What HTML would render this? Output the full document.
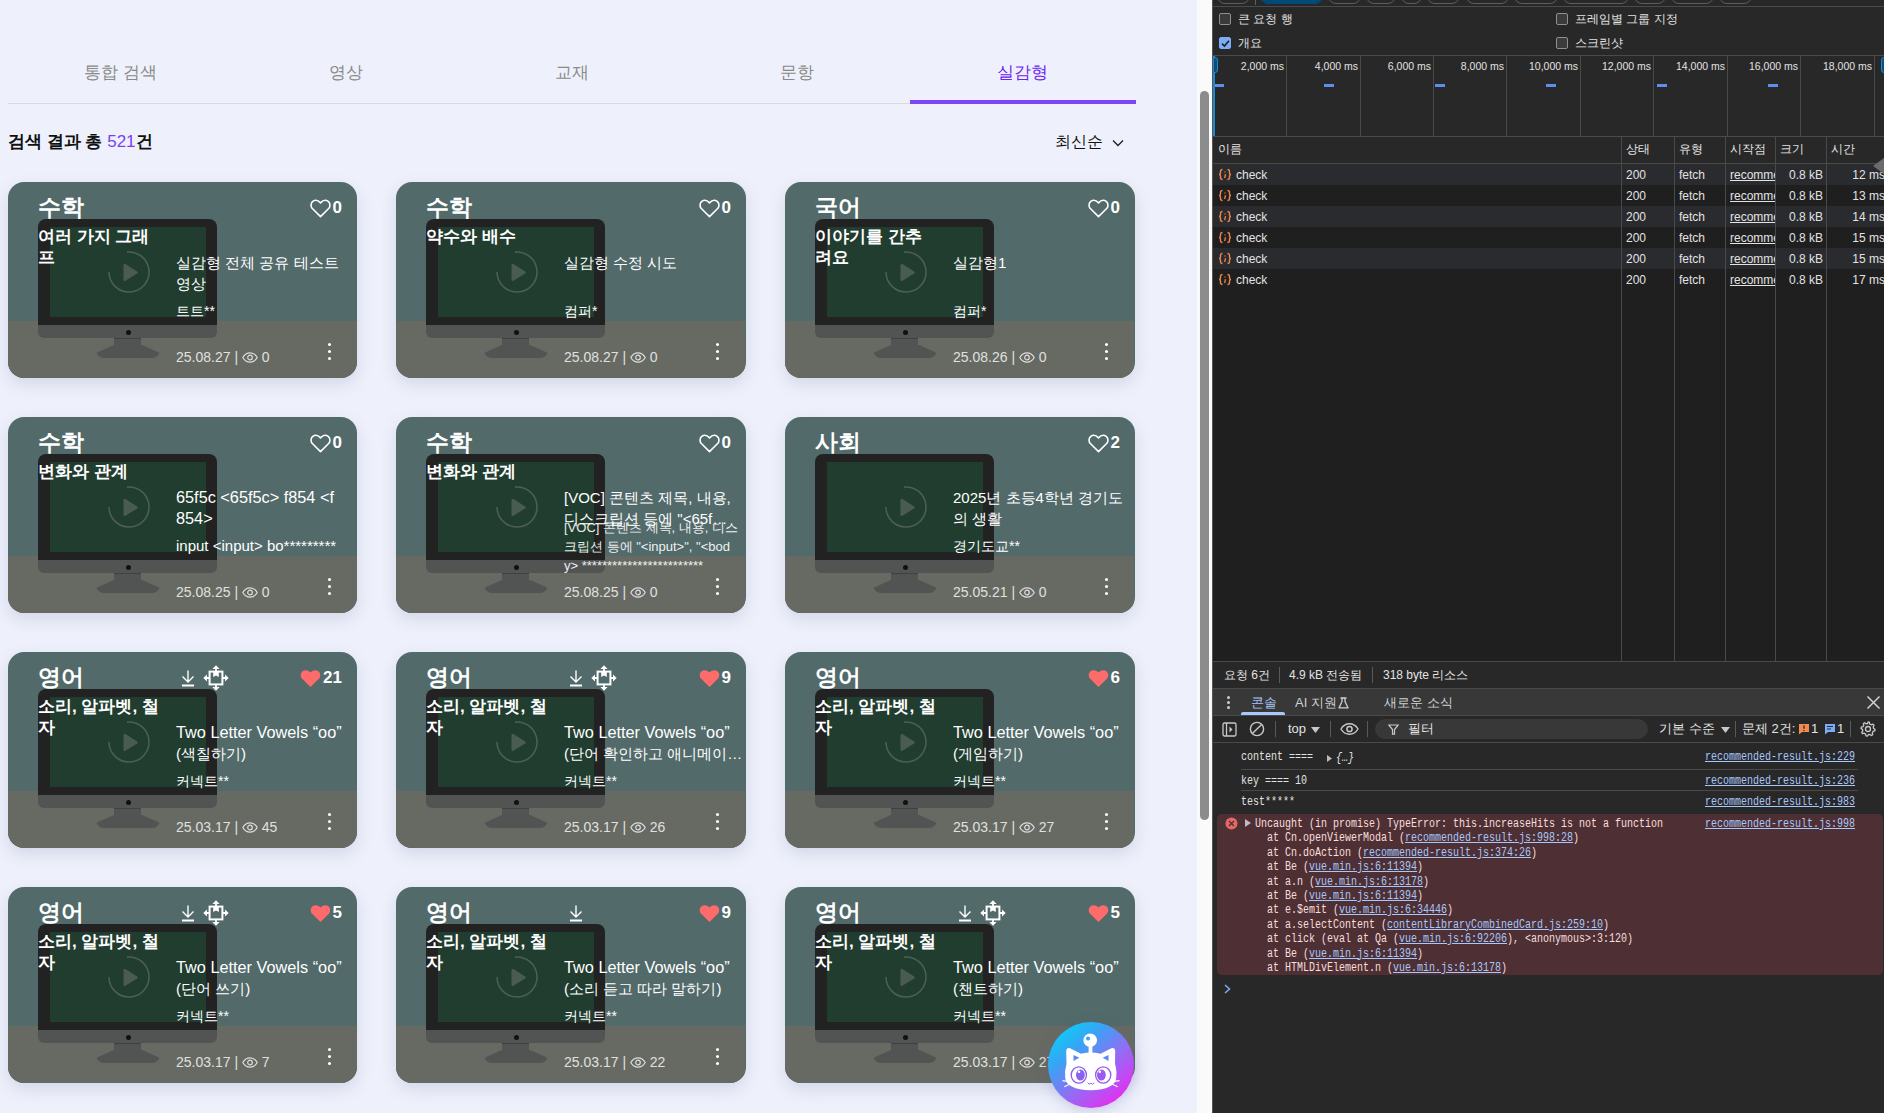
<!DOCTYPE html>
<html><head><meta charset="utf-8">
<style>
*{margin:0;padding:0;box-sizing:border-box}
html,body{width:1884px;height:1113px;overflow:hidden;background:#eef1fb;font-family:"Liberation Sans",sans-serif}
.abs{position:absolute}
#page{position:absolute;left:0;top:0;width:1197px;height:1113px;background:#eef1fb;overflow:hidden}
.tab{position:absolute;top:61px;height:24px;font-size:17px;color:#8a8a8a;text-align:center;width:225px;line-height:24px}
.tab.on{color:#6c22f4}
#tabline{position:absolute;left:8px;top:103px;width:1128px;height:1px;background:#d9d9de}
#tabbar{position:absolute;left:910px;top:100px;width:226px;height:4px;background:#7d45f8}
#total{position:absolute;left:8px;top:131px;font-size:17px;font-weight:bold;color:#111;line-height:22px}
#total b{color:#7b3ff2;font-weight:normal}
#sort{position:absolute;left:1055px;top:131px;font-size:16px;color:#111;line-height:22px}
#chev{position:absolute;left:1112px;top:139px}
.card{position:absolute;width:349px;height:196px;border-radius:16px;background:#536a6a;overflow:hidden;box-shadow:0 6px 16px rgba(90,100,150,.18)}
.desk{position:absolute;left:0;top:139px;width:349px;height:57px;background:#676a62}
.mon{position:absolute;left:30px;top:37px;width:179px;height:140px}
.mon:before{content:"";position:absolute;left:0;top:0;width:179px;height:106px;background:#222;border-radius:8px 8px 0 0}
.scr{position:absolute;left:12px;top:8px;width:156px;height:90px;background:#213d2f}
.chin{position:absolute;left:0;top:106px;width:179px;height:13px;background:#525453;border-radius:0 0 6px 6px}
.chin i{position:absolute;left:87.5px;top:5px;width:5px;height:5px;border-radius:50%;background:#111}
.neck{position:absolute;left:76px;top:119px;width:27px;height:8px;background:#525453;border-top:1.5px solid #3f4140}
.base{position:absolute;left:58px;top:126px;width:64px;height:13px;background:#525453;clip-path:polygon(28% 0,72% 0,100% 62%,98% 100%,2% 100%,0 62%);border-radius:0 0 8px 8px}
.play{position:absolute;left:69px;top:31px}
.subj{position:absolute;left:30px;top:11px;font-size:23px;font-weight:bold;color:#fff;line-height:28px;white-space:nowrap}
.cat{position:absolute;left:30px;top:44px;width:160px;white-space:nowrap;font-size:17px;font-weight:bold;color:#fff;line-height:21px}
.ttl{position:absolute;left:168px;top:70px;width:170px;font-size:15px;color:#fff;line-height:21px;display:-webkit-box;-webkit-line-clamp:2;-webkit-box-orient:vertical;overflow:hidden}
.lat{font-size:16.3px}
.lat2{font-size:15px}
.auth{position:absolute;left:168px;top:120px;width:175px;font-size:14px;color:#fff;line-height:18px;white-space:nowrap}
.auth2{position:absolute;left:168px;top:101px;width:175px;font-size:13px;color:#fff;line-height:19px;white-space:nowrap;opacity:.9}
.date{position:absolute;left:168px;top:166px;font-size:14px;color:#e0e0e0;line-height:18px;white-space:nowrap}
.date svg{vertical-align:-1px}
.keb{position:absolute;left:320px;top:161px;width:3px;height:17px}
.keb i{display:block;width:3px;height:3px;border-radius:50%;background:#fff;margin-bottom:4px}
.like{position:absolute;right:15px;top:14.5px;height:22px;white-space:nowrap;display:flex;align-items:center}
.like .hrt{margin-right:2px;margin-top:1px}
.like span{font-size:17px;font-weight:bold;color:#fff;line-height:22px}
.dl{position:absolute;left:173px;top:17px}
.mv{position:absolute;left:195px;top:13px}
#sbtrack{position:absolute;left:1197px;top:0;width:15px;height:1113px;background:#fafafa}
#sbthumb{position:absolute;left:1200px;top:91px;width:9px;height:729px;background:#8c8c8c;border-radius:5px}
#bot{position:absolute;left:1047.5px;top:1022px;width:86px;height:86px;border-radius:50%;background:linear-gradient(140deg,#00d8f6 5%,#3aa2f5 32%,#8a72f5 55%,#c24af2 75%,#f71ded 95%);box-shadow:0 4px 14px rgba(80,80,160,.22)}
/* devtools */
#dt{position:absolute;left:1212px;top:0;width:672px;height:1113px;background:#282828;color:#e3e3e3;overflow:hidden}

#dt *{position:absolute}
#dt .ln{height:1px;background:#4a4a4a;left:0;width:672px}
#dt .vl{width:1px;background:#4a4a4a}
#dt .chip{top:-18px;height:22px;border:1px solid #5e5e5e;border-radius:8px}
#dt .cb{width:12px;height:12px;border:1px solid #8f8f8f;border-radius:2px;background:#3b3b3b}
#dt .t{font-size:12px;line-height:14px;color:#e3e3e3;white-space:nowrap}
#dt .gl{width:1px;background:#4a4a4a;top:56px;height:80px}
#dt .lbl{top:60px;font-size:10.5px;line-height:12px;color:#e3e3e3;white-space:nowrap;text-align:right;width:70px}
#dt .dash{top:84px;width:10px;height:3px;background:#5b8ef0}
#dt .row{left:1px;width:671px;height:21px}
#dt .ic{left:6px;top:4px;font-size:11px;color:#e8844c;font-weight:bold;letter-spacing:-1px}
#dt .cell{font-size:12px;line-height:21px;color:#e3e3e3;white-space:nowrap;top:1px}
#dt .u{text-decoration:underline}
#dt .mono{font-family:"Liberation Mono",monospace;font-size:12px;line-height:14.4px;white-space:pre;color:#e3e3e3;transform:scaleX(0.8333);transform-origin:0 0}
#dt .lnk{color:#a8c7fa;text-decoration:underline}
#dt .mono span{position:static}
</style></head>
<body>
<div id="page">
<div class="tab" style="left:8px">통합 검색</div>
<div class="tab" style="left:233px">영상</div>
<div class="tab" style="left:459px">교재</div>
<div class="tab" style="left:684px">문항</div>
<div class="tab on" style="left:910px">실감형</div>
<div id="tabline"></div><div id="tabbar"></div>
<div id="total">검색 결과 총 <b>521</b>건</div>
<div id="sort">최신순</div>
<svg id="chev" width="12" height="9" viewBox="0 0 12 9"><path d="M1 1.5 L6 6.5 L11 1.5" fill="none" stroke="#222" stroke-width="1.4"/></svg>
<div class="card" style="left:8px;top:182px;width:349px"><div class="desk"></div><div class="mon"><div class="scr"></div><div class="chin"><i></i></div><div class="neck"></div><div class="base"></div><svg class="play" width="44" height="44" viewBox="0 0 44 44"><path d="M2 22 A20 20 0 1 0 20 2.1" fill="none" stroke="#4b5f55" stroke-width="1.6"/><path d="M16.5 15.5 Q16.5 13 18.8 14.3 L29.8 21.2 Q31.8 22.5 29.8 23.8 L18.8 30.6 Q16.5 32 16.5 29.5 Z" fill="#4a5c52"/></svg></div><div class="subj">수학</div><div class="cat">여러 가지 그래<br>프</div><div class="ttl" style="display:block;white-space:nowrap;width:190px">실감형 전체 공유 테스트<br>영상</div><div class="auth">트트**</div><div class="date">25.08.27 | <svg class="eye" width="16" height="11" viewBox="0 0 16 11"><path d="M0.8 5.5 C3 1.6 5.5 0.8 8 0.8 C10.5 0.8 13 1.6 15.2 5.5 C13 9.4 10.5 10.2 8 10.2 C5.5 10.2 3 9.4 0.8 5.5 Z" fill="none" stroke="#ddd" stroke-width="1.2"/><circle cx="8" cy="5.5" r="2.3" fill="none" stroke="#ddd" stroke-width="1.2"/></svg> 0</div><div class="keb"><i></i><i></i><i></i></div><div class="like"><svg class="hrt" width="21" height="19" viewBox="0 0 21 19"><path d="M10.5 17.6 L2.6 9.8 C0.4 7.6 0.6 4.2 2.8 2.4 C4.9 0.8 8 1.1 10.5 3.9 C13 1.1 16.1 0.8 18.2 2.4 C20.4 4.2 20.6 7.6 18.4 9.8 Z" fill="none" stroke="#fff" stroke-width="1.6" stroke-linejoin="round"/></svg><span>0</span></div></div>
<div class="card" style="left:396px;top:182px;width:350px"><div class="desk"></div><div class="mon"><div class="scr"></div><div class="chin"><i></i></div><div class="neck"></div><div class="base"></div><svg class="play" width="44" height="44" viewBox="0 0 44 44"><path d="M2 22 A20 20 0 1 0 20 2.1" fill="none" stroke="#4b5f55" stroke-width="1.6"/><path d="M16.5 15.5 Q16.5 13 18.8 14.3 L29.8 21.2 Q31.8 22.5 29.8 23.8 L18.8 30.6 Q16.5 32 16.5 29.5 Z" fill="#4a5c52"/></svg></div><div class="subj">수학</div><div class="cat">약수와 배수</div><div class="ttl">실감형 수정 시도</div><div class="auth">컴퍼*</div><div class="date">25.08.27 | <svg class="eye" width="16" height="11" viewBox="0 0 16 11"><path d="M0.8 5.5 C3 1.6 5.5 0.8 8 0.8 C10.5 0.8 13 1.6 15.2 5.5 C13 9.4 10.5 10.2 8 10.2 C5.5 10.2 3 9.4 0.8 5.5 Z" fill="none" stroke="#ddd" stroke-width="1.2"/><circle cx="8" cy="5.5" r="2.3" fill="none" stroke="#ddd" stroke-width="1.2"/></svg> 0</div><div class="keb"><i></i><i></i><i></i></div><div class="like"><svg class="hrt" width="21" height="19" viewBox="0 0 21 19"><path d="M10.5 17.6 L2.6 9.8 C0.4 7.6 0.6 4.2 2.8 2.4 C4.9 0.8 8 1.1 10.5 3.9 C13 1.1 16.1 0.8 18.2 2.4 C20.4 4.2 20.6 7.6 18.4 9.8 Z" fill="none" stroke="#fff" stroke-width="1.6" stroke-linejoin="round"/></svg><span>0</span></div></div>
<div class="card" style="left:785px;top:182px;width:350px"><div class="desk"></div><div class="mon"><div class="scr"></div><div class="chin"><i></i></div><div class="neck"></div><div class="base"></div><svg class="play" width="44" height="44" viewBox="0 0 44 44"><path d="M2 22 A20 20 0 1 0 20 2.1" fill="none" stroke="#4b5f55" stroke-width="1.6"/><path d="M16.5 15.5 Q16.5 13 18.8 14.3 L29.8 21.2 Q31.8 22.5 29.8 23.8 L18.8 30.6 Q16.5 32 16.5 29.5 Z" fill="#4a5c52"/></svg></div><div class="subj">국어</div><div class="cat">이야기를 간추<br>려요</div><div class="ttl">실감형1</div><div class="auth">컴퍼*</div><div class="date">25.08.26 | <svg class="eye" width="16" height="11" viewBox="0 0 16 11"><path d="M0.8 5.5 C3 1.6 5.5 0.8 8 0.8 C10.5 0.8 13 1.6 15.2 5.5 C13 9.4 10.5 10.2 8 10.2 C5.5 10.2 3 9.4 0.8 5.5 Z" fill="none" stroke="#ddd" stroke-width="1.2"/><circle cx="8" cy="5.5" r="2.3" fill="none" stroke="#ddd" stroke-width="1.2"/></svg> 0</div><div class="keb"><i></i><i></i><i></i></div><div class="like"><svg class="hrt" width="21" height="19" viewBox="0 0 21 19"><path d="M10.5 17.6 L2.6 9.8 C0.4 7.6 0.6 4.2 2.8 2.4 C4.9 0.8 8 1.1 10.5 3.9 C13 1.1 16.1 0.8 18.2 2.4 C20.4 4.2 20.6 7.6 18.4 9.8 Z" fill="none" stroke="#fff" stroke-width="1.6" stroke-linejoin="round"/></svg><span>0</span></div></div>
<div class="card" style="left:8px;top:417px;width:349px"><div class="desk"></div><div class="mon"><div class="scr"></div><div class="chin"><i></i></div><div class="neck"></div><div class="base"></div><svg class="play" width="44" height="44" viewBox="0 0 44 44"><path d="M2 22 A20 20 0 1 0 20 2.1" fill="none" stroke="#4b5f55" stroke-width="1.6"/><path d="M16.5 15.5 Q16.5 13 18.8 14.3 L29.8 21.2 Q31.8 22.5 29.8 23.8 L18.8 30.6 Q16.5 32 16.5 29.5 Z" fill="#4a5c52"/></svg></div><div class="subj">수학</div><div class="cat">변화와 관계</div><div class="ttl" style="display:block;white-space:nowrap;width:190px"><span class="lat">65f5c &lt;65f5c&gt; f854 &lt;f<br>854&gt;</span></div><div class="auth"><span class="lat2">input &lt;input&gt; bo*********</span></div><div class="date">25.08.25 | <svg class="eye" width="16" height="11" viewBox="0 0 16 11"><path d="M0.8 5.5 C3 1.6 5.5 0.8 8 0.8 C10.5 0.8 13 1.6 15.2 5.5 C13 9.4 10.5 10.2 8 10.2 C5.5 10.2 3 9.4 0.8 5.5 Z" fill="none" stroke="#ddd" stroke-width="1.2"/><circle cx="8" cy="5.5" r="2.3" fill="none" stroke="#ddd" stroke-width="1.2"/></svg> 0</div><div class="keb"><i></i><i></i><i></i></div><div class="like"><svg class="hrt" width="21" height="19" viewBox="0 0 21 19"><path d="M10.5 17.6 L2.6 9.8 C0.4 7.6 0.6 4.2 2.8 2.4 C4.9 0.8 8 1.1 10.5 3.9 C13 1.1 16.1 0.8 18.2 2.4 C20.4 4.2 20.6 7.6 18.4 9.8 Z" fill="none" stroke="#fff" stroke-width="1.6" stroke-linejoin="round"/></svg><span>0</span></div></div>
<div class="card" style="left:396px;top:417px;width:350px"><div class="desk"></div><div class="mon"><div class="scr"></div><div class="chin"><i></i></div><div class="neck"></div><div class="base"></div><svg class="play" width="44" height="44" viewBox="0 0 44 44"><path d="M2 22 A20 20 0 1 0 20 2.1" fill="none" stroke="#4b5f55" stroke-width="1.6"/><path d="M16.5 15.5 Q16.5 13 18.8 14.3 L29.8 21.2 Q31.8 22.5 29.8 23.8 L18.8 30.6 Q16.5 32 16.5 29.5 Z" fill="#4a5c52"/></svg></div><div class="subj">수학</div><div class="cat">변화와 관계</div><div class="ttl" style="width:190px;display:block;white-space:nowrap">[VOC] 콘텐츠 제목, 내용,<br>디스크립션 등에 "&lt;65f…</div><div class="auth2">[VOC] 콘텐츠 제목, 내용, 디스<br>크립션 등에 "&lt;input&gt;", "&lt;bod<br>y&gt; ************************</div><div class="date">25.08.25 | <svg class="eye" width="16" height="11" viewBox="0 0 16 11"><path d="M0.8 5.5 C3 1.6 5.5 0.8 8 0.8 C10.5 0.8 13 1.6 15.2 5.5 C13 9.4 10.5 10.2 8 10.2 C5.5 10.2 3 9.4 0.8 5.5 Z" fill="none" stroke="#ddd" stroke-width="1.2"/><circle cx="8" cy="5.5" r="2.3" fill="none" stroke="#ddd" stroke-width="1.2"/></svg> 0</div><div class="keb"><i></i><i></i><i></i></div><div class="like"><svg class="hrt" width="21" height="19" viewBox="0 0 21 19"><path d="M10.5 17.6 L2.6 9.8 C0.4 7.6 0.6 4.2 2.8 2.4 C4.9 0.8 8 1.1 10.5 3.9 C13 1.1 16.1 0.8 18.2 2.4 C20.4 4.2 20.6 7.6 18.4 9.8 Z" fill="none" stroke="#fff" stroke-width="1.6" stroke-linejoin="round"/></svg><span>0</span></div></div>
<div class="card" style="left:785px;top:417px;width:350px"><div class="desk"></div><div class="mon"><div class="scr"></div><div class="chin"><i></i></div><div class="neck"></div><div class="base"></div><svg class="play" width="44" height="44" viewBox="0 0 44 44"><path d="M2 22 A20 20 0 1 0 20 2.1" fill="none" stroke="#4b5f55" stroke-width="1.6"/><path d="M16.5 15.5 Q16.5 13 18.8 14.3 L29.8 21.2 Q31.8 22.5 29.8 23.8 L18.8 30.6 Q16.5 32 16.5 29.5 Z" fill="#4a5c52"/></svg></div><div class="subj">사회</div><div class="ttl" style="display:block;white-space:nowrap;width:190px">2025년 초등4학년 경기도<br>의 생활</div><div class="auth">경기도교**</div><div class="date">25.05.21 | <svg class="eye" width="16" height="11" viewBox="0 0 16 11"><path d="M0.8 5.5 C3 1.6 5.5 0.8 8 0.8 C10.5 0.8 13 1.6 15.2 5.5 C13 9.4 10.5 10.2 8 10.2 C5.5 10.2 3 9.4 0.8 5.5 Z" fill="none" stroke="#ddd" stroke-width="1.2"/><circle cx="8" cy="5.5" r="2.3" fill="none" stroke="#ddd" stroke-width="1.2"/></svg> 0</div><div class="keb"><i></i><i></i><i></i></div><div class="like"><svg class="hrt" width="21" height="19" viewBox="0 0 21 19"><path d="M10.5 17.6 L2.6 9.8 C0.4 7.6 0.6 4.2 2.8 2.4 C4.9 0.8 8 1.1 10.5 3.9 C13 1.1 16.1 0.8 18.2 2.4 C20.4 4.2 20.6 7.6 18.4 9.8 Z" fill="none" stroke="#fff" stroke-width="1.6" stroke-linejoin="round"/></svg><span>2</span></div></div>
<div class="card" style="left:8px;top:652px;width:349px"><div class="desk"></div><div class="mon"><div class="scr"></div><div class="chin"><i></i></div><div class="neck"></div><div class="base"></div><svg class="play" width="44" height="44" viewBox="0 0 44 44"><path d="M2 22 A20 20 0 1 0 20 2.1" fill="none" stroke="#4b5f55" stroke-width="1.6"/><path d="M16.5 15.5 Q16.5 13 18.8 14.3 L29.8 21.2 Q31.8 22.5 29.8 23.8 L18.8 30.6 Q16.5 32 16.5 29.5 Z" fill="#4a5c52"/></svg></div><div class="subj">영어</div><div class="cat">소리, 알파벳, 철<br>자</div><div class="ttl" style="display:block;white-space:nowrap;width:190px"><span class="lat">Two Letter Vowels “oo”</span><br>(색칠하기)</div><div class="auth">커넥트**</div><div class="date">25.03.17 | <svg class="eye" width="16" height="11" viewBox="0 0 16 11"><path d="M0.8 5.5 C3 1.6 5.5 0.8 8 0.8 C10.5 0.8 13 1.6 15.2 5.5 C13 9.4 10.5 10.2 8 10.2 C5.5 10.2 3 9.4 0.8 5.5 Z" fill="none" stroke="#ddd" stroke-width="1.2"/><circle cx="8" cy="5.5" r="2.3" fill="none" stroke="#ddd" stroke-width="1.2"/></svg> 45</div><div class="keb"><i></i><i></i><i></i></div><div class="like"><svg class="hrt" width="21" height="19" viewBox="0 0 21 19"><path d="M10.5 18 L2.4 10 C0 7.7 0.3 4 2.6 2.2 C4.8 0.5 8 0.9 10.5 3.6 C13 0.9 16.2 0.5 18.4 2.2 C20.7 4 21 7.7 18.6 10 Z" fill="#ff6b6b"/></svg><span>21</span></div><svg class="dl" width="14" height="19" viewBox="0 0 14 19"><path d="M7 1.5 V12.5 M1.5 7.5 L7 13 L12.5 7.5" fill="none" stroke="#fff" stroke-width="1.4"/><path d="M1 16.5 H13" stroke="#fff" stroke-width="1.8"/></svg><svg class="mv" width="26" height="26" viewBox="0 0 26 26"><rect x="6.6" y="6.6" width="12.8" height="12.8" fill="none" stroke="#fff" stroke-width="2"/><path d="M10.2 7 V12 L13 10.4 L15.8 12 V7 Z" fill="#fff"/><path d="M13 0.3 L16.6 4 H9.4 Z M13 25.7 L16.6 22 H9.4 Z M0.3 13 L4 9.4 V16.6 Z M25.7 13 L22 9.4 V16.6 Z" fill="#fff"/><path d="M13 3.5 V6 M13 20 V22.5 M3.5 13 H6 M20 13 H22.5" stroke="#fff" stroke-width="1.8"/></svg></div>
<div class="card" style="left:396px;top:652px;width:350px"><div class="desk"></div><div class="mon"><div class="scr"></div><div class="chin"><i></i></div><div class="neck"></div><div class="base"></div><svg class="play" width="44" height="44" viewBox="0 0 44 44"><path d="M2 22 A20 20 0 1 0 20 2.1" fill="none" stroke="#4b5f55" stroke-width="1.6"/><path d="M16.5 15.5 Q16.5 13 18.8 14.3 L29.8 21.2 Q31.8 22.5 29.8 23.8 L18.8 30.6 Q16.5 32 16.5 29.5 Z" fill="#4a5c52"/></svg></div><div class="subj">영어</div><div class="cat">소리, 알파벳, 철<br>자</div><div class="ttl" style="display:block;white-space:nowrap;width:190px"><span class="lat">Two Letter Vowels “oo”</span><br>(단어 확인하고 애니메이…</div><div class="auth">커넥트**</div><div class="date">25.03.17 | <svg class="eye" width="16" height="11" viewBox="0 0 16 11"><path d="M0.8 5.5 C3 1.6 5.5 0.8 8 0.8 C10.5 0.8 13 1.6 15.2 5.5 C13 9.4 10.5 10.2 8 10.2 C5.5 10.2 3 9.4 0.8 5.5 Z" fill="none" stroke="#ddd" stroke-width="1.2"/><circle cx="8" cy="5.5" r="2.3" fill="none" stroke="#ddd" stroke-width="1.2"/></svg> 26</div><div class="keb"><i></i><i></i><i></i></div><div class="like"><svg class="hrt" width="21" height="19" viewBox="0 0 21 19"><path d="M10.5 18 L2.4 10 C0 7.7 0.3 4 2.6 2.2 C4.8 0.5 8 0.9 10.5 3.6 C13 0.9 16.2 0.5 18.4 2.2 C20.7 4 21 7.7 18.6 10 Z" fill="#ff6b6b"/></svg><span>9</span></div><svg class="dl" width="14" height="19" viewBox="0 0 14 19"><path d="M7 1.5 V12.5 M1.5 7.5 L7 13 L12.5 7.5" fill="none" stroke="#fff" stroke-width="1.4"/><path d="M1 16.5 H13" stroke="#fff" stroke-width="1.8"/></svg><svg class="mv" width="26" height="26" viewBox="0 0 26 26"><rect x="6.6" y="6.6" width="12.8" height="12.8" fill="none" stroke="#fff" stroke-width="2"/><path d="M10.2 7 V12 L13 10.4 L15.8 12 V7 Z" fill="#fff"/><path d="M13 0.3 L16.6 4 H9.4 Z M13 25.7 L16.6 22 H9.4 Z M0.3 13 L4 9.4 V16.6 Z M25.7 13 L22 9.4 V16.6 Z" fill="#fff"/><path d="M13 3.5 V6 M13 20 V22.5 M3.5 13 H6 M20 13 H22.5" stroke="#fff" stroke-width="1.8"/></svg></div>
<div class="card" style="left:785px;top:652px;width:350px"><div class="desk"></div><div class="mon"><div class="scr"></div><div class="chin"><i></i></div><div class="neck"></div><div class="base"></div><svg class="play" width="44" height="44" viewBox="0 0 44 44"><path d="M2 22 A20 20 0 1 0 20 2.1" fill="none" stroke="#4b5f55" stroke-width="1.6"/><path d="M16.5 15.5 Q16.5 13 18.8 14.3 L29.8 21.2 Q31.8 22.5 29.8 23.8 L18.8 30.6 Q16.5 32 16.5 29.5 Z" fill="#4a5c52"/></svg></div><div class="subj">영어</div><div class="cat">소리, 알파벳, 철<br>자</div><div class="ttl" style="display:block;white-space:nowrap;width:190px"><span class="lat">Two Letter Vowels “oo”</span><br>(게임하기)</div><div class="auth">커넥트**</div><div class="date">25.03.17 | <svg class="eye" width="16" height="11" viewBox="0 0 16 11"><path d="M0.8 5.5 C3 1.6 5.5 0.8 8 0.8 C10.5 0.8 13 1.6 15.2 5.5 C13 9.4 10.5 10.2 8 10.2 C5.5 10.2 3 9.4 0.8 5.5 Z" fill="none" stroke="#ddd" stroke-width="1.2"/><circle cx="8" cy="5.5" r="2.3" fill="none" stroke="#ddd" stroke-width="1.2"/></svg> 27</div><div class="keb"><i></i><i></i><i></i></div><div class="like"><svg class="hrt" width="21" height="19" viewBox="0 0 21 19"><path d="M10.5 18 L2.4 10 C0 7.7 0.3 4 2.6 2.2 C4.8 0.5 8 0.9 10.5 3.6 C13 0.9 16.2 0.5 18.4 2.2 C20.7 4 21 7.7 18.6 10 Z" fill="#ff6b6b"/></svg><span>6</span></div></div>
<div class="card" style="left:8px;top:887px;width:349px"><div class="desk"></div><div class="mon"><div class="scr"></div><div class="chin"><i></i></div><div class="neck"></div><div class="base"></div><svg class="play" width="44" height="44" viewBox="0 0 44 44"><path d="M2 22 A20 20 0 1 0 20 2.1" fill="none" stroke="#4b5f55" stroke-width="1.6"/><path d="M16.5 15.5 Q16.5 13 18.8 14.3 L29.8 21.2 Q31.8 22.5 29.8 23.8 L18.8 30.6 Q16.5 32 16.5 29.5 Z" fill="#4a5c52"/></svg></div><div class="subj">영어</div><div class="cat">소리, 알파벳, 철<br>자</div><div class="ttl" style="display:block;white-space:nowrap;width:190px"><span class="lat">Two Letter Vowels “oo”</span><br>(단어 쓰기)</div><div class="auth">커넥트**</div><div class="date">25.03.17 | <svg class="eye" width="16" height="11" viewBox="0 0 16 11"><path d="M0.8 5.5 C3 1.6 5.5 0.8 8 0.8 C10.5 0.8 13 1.6 15.2 5.5 C13 9.4 10.5 10.2 8 10.2 C5.5 10.2 3 9.4 0.8 5.5 Z" fill="none" stroke="#ddd" stroke-width="1.2"/><circle cx="8" cy="5.5" r="2.3" fill="none" stroke="#ddd" stroke-width="1.2"/></svg> 7</div><div class="keb"><i></i><i></i><i></i></div><div class="like"><svg class="hrt" width="21" height="19" viewBox="0 0 21 19"><path d="M10.5 18 L2.4 10 C0 7.7 0.3 4 2.6 2.2 C4.8 0.5 8 0.9 10.5 3.6 C13 0.9 16.2 0.5 18.4 2.2 C20.7 4 21 7.7 18.6 10 Z" fill="#ff6b6b"/></svg><span>5</span></div><svg class="dl" width="14" height="19" viewBox="0 0 14 19"><path d="M7 1.5 V12.5 M1.5 7.5 L7 13 L12.5 7.5" fill="none" stroke="#fff" stroke-width="1.4"/><path d="M1 16.5 H13" stroke="#fff" stroke-width="1.8"/></svg><svg class="mv" width="26" height="26" viewBox="0 0 26 26"><rect x="6.6" y="6.6" width="12.8" height="12.8" fill="none" stroke="#fff" stroke-width="2"/><path d="M10.2 7 V12 L13 10.4 L15.8 12 V7 Z" fill="#fff"/><path d="M13 0.3 L16.6 4 H9.4 Z M13 25.7 L16.6 22 H9.4 Z M0.3 13 L4 9.4 V16.6 Z M25.7 13 L22 9.4 V16.6 Z" fill="#fff"/><path d="M13 3.5 V6 M13 20 V22.5 M3.5 13 H6 M20 13 H22.5" stroke="#fff" stroke-width="1.8"/></svg></div>
<div class="card" style="left:396px;top:887px;width:350px"><div class="desk"></div><div class="mon"><div class="scr"></div><div class="chin"><i></i></div><div class="neck"></div><div class="base"></div><svg class="play" width="44" height="44" viewBox="0 0 44 44"><path d="M2 22 A20 20 0 1 0 20 2.1" fill="none" stroke="#4b5f55" stroke-width="1.6"/><path d="M16.5 15.5 Q16.5 13 18.8 14.3 L29.8 21.2 Q31.8 22.5 29.8 23.8 L18.8 30.6 Q16.5 32 16.5 29.5 Z" fill="#4a5c52"/></svg></div><div class="subj">영어</div><div class="cat">소리, 알파벳, 철<br>자</div><div class="ttl" style="display:block;white-space:nowrap;width:190px"><span class="lat">Two Letter Vowels “oo”</span><br>(소리 듣고 따라 말하기)</div><div class="auth">커넥트**</div><div class="date">25.03.17 | <svg class="eye" width="16" height="11" viewBox="0 0 16 11"><path d="M0.8 5.5 C3 1.6 5.5 0.8 8 0.8 C10.5 0.8 13 1.6 15.2 5.5 C13 9.4 10.5 10.2 8 10.2 C5.5 10.2 3 9.4 0.8 5.5 Z" fill="none" stroke="#ddd" stroke-width="1.2"/><circle cx="8" cy="5.5" r="2.3" fill="none" stroke="#ddd" stroke-width="1.2"/></svg> 22</div><div class="keb"><i></i><i></i><i></i></div><div class="like"><svg class="hrt" width="21" height="19" viewBox="0 0 21 19"><path d="M10.5 18 L2.4 10 C0 7.7 0.3 4 2.6 2.2 C4.8 0.5 8 0.9 10.5 3.6 C13 0.9 16.2 0.5 18.4 2.2 C20.7 4 21 7.7 18.6 10 Z" fill="#ff6b6b"/></svg><span>9</span></div><svg class="dl" width="14" height="19" viewBox="0 0 14 19"><path d="M7 1.5 V12.5 M1.5 7.5 L7 13 L12.5 7.5" fill="none" stroke="#fff" stroke-width="1.4"/><path d="M1 16.5 H13" stroke="#fff" stroke-width="1.8"/></svg></div>
<div class="card" style="left:785px;top:887px;width:350px"><div class="desk"></div><div class="mon"><div class="scr"></div><div class="chin"><i></i></div><div class="neck"></div><div class="base"></div><svg class="play" width="44" height="44" viewBox="0 0 44 44"><path d="M2 22 A20 20 0 1 0 20 2.1" fill="none" stroke="#4b5f55" stroke-width="1.6"/><path d="M16.5 15.5 Q16.5 13 18.8 14.3 L29.8 21.2 Q31.8 22.5 29.8 23.8 L18.8 30.6 Q16.5 32 16.5 29.5 Z" fill="#4a5c52"/></svg></div><div class="subj">영어</div><div class="cat">소리, 알파벳, 철<br>자</div><div class="ttl" style="display:block;white-space:nowrap;width:190px"><span class="lat">Two Letter Vowels “oo”</span><br>(챈트하기)</div><div class="auth">커넥트**</div><div class="date">25.03.17 | <svg class="eye" width="16" height="11" viewBox="0 0 16 11"><path d="M0.8 5.5 C3 1.6 5.5 0.8 8 0.8 C10.5 0.8 13 1.6 15.2 5.5 C13 9.4 10.5 10.2 8 10.2 C5.5 10.2 3 9.4 0.8 5.5 Z" fill="none" stroke="#ddd" stroke-width="1.2"/><circle cx="8" cy="5.5" r="2.3" fill="none" stroke="#ddd" stroke-width="1.2"/></svg> 27</div><div class="keb"><i></i><i></i><i></i></div><div class="like"><svg class="hrt" width="21" height="19" viewBox="0 0 21 19"><path d="M10.5 18 L2.4 10 C0 7.7 0.3 4 2.6 2.2 C4.8 0.5 8 0.9 10.5 3.6 C13 0.9 16.2 0.5 18.4 2.2 C20.7 4 21 7.7 18.6 10 Z" fill="#ff6b6b"/></svg><span>5</span></div><svg class="dl" width="14" height="19" viewBox="0 0 14 19"><path d="M7 1.5 V12.5 M1.5 7.5 L7 13 L12.5 7.5" fill="none" stroke="#fff" stroke-width="1.4"/><path d="M1 16.5 H13" stroke="#fff" stroke-width="1.8"/></svg><svg class="mv" width="26" height="26" viewBox="0 0 26 26"><rect x="6.6" y="6.6" width="12.8" height="12.8" fill="none" stroke="#fff" stroke-width="2"/><path d="M10.2 7 V12 L13 10.4 L15.8 12 V7 Z" fill="#fff"/><path d="M13 0.3 L16.6 4 H9.4 Z M13 25.7 L16.6 22 H9.4 Z M0.3 13 L4 9.4 V16.6 Z M25.7 13 L22 9.4 V16.6 Z" fill="#fff"/><path d="M13 3.5 V6 M13 20 V22.5 M3.5 13 H6 M20 13 H22.5" stroke="#fff" stroke-width="1.8"/></svg></div>
<div id="bot"><svg width="86" height="86" viewBox="0 0 86 86" style="position:absolute;left:0;top:0">
<circle cx="42.2" cy="18.3" r="6.8" fill="#fff"/><circle cx="40" cy="16.5" r="2" fill="#3a9ff5"/>
<rect x="40.6" y="24.5" width="3.8" height="7" fill="#fff"/>
<path d="M22 26.2 Q18 25.3 18.2 30 L18.5 42 Q16.5 48 17.2 56 Q18.5 67.5 42.7 68.3 Q67 67.5 68.2 56 Q69 48 67 42 L67.2 30 Q67.4 25.3 63.4 26.2 L52.5 31.8 Q42.7 29 33 31.8 Z" fill="#fff"/>
<path d="M25.5 33 L31.3 35.8 L25.5 38.9 Z M60.5 33 L54.7 35.8 L60.5 38.9 Z" fill="#5f87f2"/>
<ellipse cx="30.8" cy="53" rx="7.6" ry="8.2" fill="none" stroke="#8d5cf2" stroke-width="1.3"/>
<ellipse cx="55.2" cy="53" rx="7.6" ry="8.2" fill="none" stroke="#9a55f2" stroke-width="1.3"/>
<ellipse cx="32.4" cy="53" rx="4.4" ry="5.6" fill="#8a62f0"/><ellipse cx="53.4" cy="53" rx="4.4" ry="5.6" fill="#9a5cf0"/>
<circle cx="31" cy="49.8" r="1.3" fill="#fff"/><circle cx="51.8" cy="49.8" r="1.3" fill="#fff"/>
<path d="M39.5 60.8 Q41 63.2 42.8 61.3 Q44.6 63.2 46.2 60.8" fill="none" stroke="#a558f0" stroke-width="1"/>
<path d="M14.5 58.6 L21.5 59.6 M16.3 64.8 L22 62.1 M71.5 58.6 L64.5 59.6 M69.7 64.8 L64 62.1" stroke="#fff" stroke-width="1.1"/>
</svg></div>
</div>
<div id="sbtrack"></div><div id="sbthumb"></div>
<div id="dt">
<div style="left:0;top:0;width:1px;height:1113px;background:#555;z-index:5"></div>
<div class="chip" style="left:5px;width:33px"></div>
<div class="chip" style="left:48px;width:63px;background:#004a77;border-color:#004a77"></div>
<div class="chip" style="left:116px;width:33px"></div>
<div class="chip" style="left:154px;width:30px"></div>
<div class="chip" style="left:189px;width:21px"></div>
<div class="chip" style="left:215px;width:33px"></div>
<div class="chip" style="left:254px;width:43px"></div>
<div class="chip" style="left:302px;width:44px"></div>
<div class="chip" style="left:351px;width:66px"></div>
<div class="chip" style="left:422px;width:32px"></div>
<div class="chip" style="left:459px;width:43px"></div>
<div class="chip" style="left:507px;width:33px"></div>
<div class="vl" style="left:43px;top:0;height:5px;background:#5e5e5e"></div>
<div class="ln" style="top:6px"></div>
<div class="cb" style="left:7px;top:13px"></div><div class="t" style="left:26px;top:12px">큰 요청 행</div>
<div class="cb" style="left:7px;top:37px;background:#7cacf8;border-color:#7cacf8"><svg style="left:1px;top:1px" width="9" height="9" viewBox="0 0 9 9"><path d="M1 4.6 L3.4 7 L8 1.8" fill="none" stroke="#1f1f1f" stroke-width="1.6"/></svg></div><div class="t" style="left:26px;top:36px">개요</div>
<div class="cb" style="left:344px;top:13px"></div><div class="t" style="left:363px;top:12px">프레임별 그룹 지정</div>
<div class="cb" style="left:344px;top:37px"></div><div class="t" style="left:363px;top:36px">스크린샷</div>
<div class="ln" style="top:55px"></div>
<div class="gl" style="left:74px"></div>
<div class="lbl" style="left:2px">2,000 ms</div>
<div class="gl" style="left:148px"></div>
<div class="lbl" style="left:76px">4,000 ms</div>
<div class="gl" style="left:221px"></div>
<div class="lbl" style="left:149px">6,000 ms</div>
<div class="gl" style="left:294px"></div>
<div class="lbl" style="left:222px">8,000 ms</div>
<div class="gl" style="left:368px"></div>
<div class="lbl" style="left:296px">10,000 ms</div>
<div class="gl" style="left:441px"></div>
<div class="lbl" style="left:369px">12,000 ms</div>
<div class="gl" style="left:515px"></div>
<div class="lbl" style="left:443px">14,000 ms</div>
<div class="gl" style="left:588px"></div>
<div class="lbl" style="left:516px">16,000 ms</div>
<div class="gl" style="left:662px"></div>
<div class="lbl" style="left:590px">18,000 ms</div>
<div class="dash" style="left:2px"></div>
<div class="dash" style="left:112px"></div>
<div class="dash" style="left:223px"></div>
<div class="dash" style="left:334px"></div>
<div class="dash" style="left:445px"></div>
<div class="dash" style="left:556px"></div>
<div style="left:1px;top:56px;width:2px;height:80px;background:#1a8ad4"></div>
<div style="left:1px;top:57px;width:5px;height:16px;background:#0b4f7a;border:1px solid #1a8ad4;border-radius:0 3px 3px 0"></div>
<div style="left:669px;top:57px;width:10px;height:16px;background:#0b4f7a;border:1.5px solid #1a8ad4;border-radius:3px"></div>
<div class="ln" style="top:136px"></div>
<div class="t" style="left:6px;top:142px">이름</div>
<div class="t" style="left:414px;top:142px">상태</div>
<div class="t" style="left:467px;top:142px">유형</div>
<div class="t" style="left:518px;top:142px">시작점</div>
<div class="t" style="left:568px;top:142px">크기</div>
<div class="t" style="left:619px;top:142px">시간</div>
<div class="ln" style="top:163px"></div>
<div style="left:1px;top:164px;width:671px;height:497px;background:#1f1f1f"></div>
<div class="row" style="top:164px;background:#2a2b2e"><svg style="left:5px;top:4px" width="14" height="13" viewBox="0 0 14 13"><path d="M4.5 1.5 Q2.5 1.5 2.5 3.5 V5 Q2.5 6.5 1 6.5 Q2.5 6.5 2.5 8 V9.5 Q2.5 11.5 4.5 11.5 M9.5 1.5 Q11.5 1.5 11.5 3.5 V5 Q11.5 6.5 13 6.5 Q11.5 6.5 11.5 8 V9.5 Q11.5 11.5 9.5 11.5" fill="none" stroke="#e8844c" stroke-width="1.4"/><path d="M7 3.5 V4.6 M6.6 7 L7.4 7 L6.6 10" stroke="#e8844c" stroke-width="1.3" fill="none"/></svg><div class="cell" style="left:23px">check</div><div class="cell" style="left:413px">200</div><div class="cell" style="left:466px">fetch</div><div class="cell u" style="left:517px;width:45px;overflow:hidden">recommended</div><div class="cell" style="left:563px;width:47px;text-align:right">0.8 kB</div><div class="cell" style="left:614px;width:58px;text-align:right">12 ms</div></div>
<div class="row" style="top:185px;background:#1f1f1f"><svg style="left:5px;top:4px" width="14" height="13" viewBox="0 0 14 13"><path d="M4.5 1.5 Q2.5 1.5 2.5 3.5 V5 Q2.5 6.5 1 6.5 Q2.5 6.5 2.5 8 V9.5 Q2.5 11.5 4.5 11.5 M9.5 1.5 Q11.5 1.5 11.5 3.5 V5 Q11.5 6.5 13 6.5 Q11.5 6.5 11.5 8 V9.5 Q11.5 11.5 9.5 11.5" fill="none" stroke="#e8844c" stroke-width="1.4"/><path d="M7 3.5 V4.6 M6.6 7 L7.4 7 L6.6 10" stroke="#e8844c" stroke-width="1.3" fill="none"/></svg><div class="cell" style="left:23px">check</div><div class="cell" style="left:413px">200</div><div class="cell" style="left:466px">fetch</div><div class="cell u" style="left:517px;width:45px;overflow:hidden">recommended</div><div class="cell" style="left:563px;width:47px;text-align:right">0.8 kB</div><div class="cell" style="left:614px;width:58px;text-align:right">13 ms</div></div>
<div class="row" style="top:206px;background:#2a2b2e"><svg style="left:5px;top:4px" width="14" height="13" viewBox="0 0 14 13"><path d="M4.5 1.5 Q2.5 1.5 2.5 3.5 V5 Q2.5 6.5 1 6.5 Q2.5 6.5 2.5 8 V9.5 Q2.5 11.5 4.5 11.5 M9.5 1.5 Q11.5 1.5 11.5 3.5 V5 Q11.5 6.5 13 6.5 Q11.5 6.5 11.5 8 V9.5 Q11.5 11.5 9.5 11.5" fill="none" stroke="#e8844c" stroke-width="1.4"/><path d="M7 3.5 V4.6 M6.6 7 L7.4 7 L6.6 10" stroke="#e8844c" stroke-width="1.3" fill="none"/></svg><div class="cell" style="left:23px">check</div><div class="cell" style="left:413px">200</div><div class="cell" style="left:466px">fetch</div><div class="cell u" style="left:517px;width:45px;overflow:hidden">recommended</div><div class="cell" style="left:563px;width:47px;text-align:right">0.8 kB</div><div class="cell" style="left:614px;width:58px;text-align:right">14 ms</div></div>
<div class="row" style="top:227px;background:#1f1f1f"><svg style="left:5px;top:4px" width="14" height="13" viewBox="0 0 14 13"><path d="M4.5 1.5 Q2.5 1.5 2.5 3.5 V5 Q2.5 6.5 1 6.5 Q2.5 6.5 2.5 8 V9.5 Q2.5 11.5 4.5 11.5 M9.5 1.5 Q11.5 1.5 11.5 3.5 V5 Q11.5 6.5 13 6.5 Q11.5 6.5 11.5 8 V9.5 Q11.5 11.5 9.5 11.5" fill="none" stroke="#e8844c" stroke-width="1.4"/><path d="M7 3.5 V4.6 M6.6 7 L7.4 7 L6.6 10" stroke="#e8844c" stroke-width="1.3" fill="none"/></svg><div class="cell" style="left:23px">check</div><div class="cell" style="left:413px">200</div><div class="cell" style="left:466px">fetch</div><div class="cell u" style="left:517px;width:45px;overflow:hidden">recommended</div><div class="cell" style="left:563px;width:47px;text-align:right">0.8 kB</div><div class="cell" style="left:614px;width:58px;text-align:right">15 ms</div></div>
<div class="row" style="top:248px;background:#2a2b2e"><svg style="left:5px;top:4px" width="14" height="13" viewBox="0 0 14 13"><path d="M4.5 1.5 Q2.5 1.5 2.5 3.5 V5 Q2.5 6.5 1 6.5 Q2.5 6.5 2.5 8 V9.5 Q2.5 11.5 4.5 11.5 M9.5 1.5 Q11.5 1.5 11.5 3.5 V5 Q11.5 6.5 13 6.5 Q11.5 6.5 11.5 8 V9.5 Q11.5 11.5 9.5 11.5" fill="none" stroke="#e8844c" stroke-width="1.4"/><path d="M7 3.5 V4.6 M6.6 7 L7.4 7 L6.6 10" stroke="#e8844c" stroke-width="1.3" fill="none"/></svg><div class="cell" style="left:23px">check</div><div class="cell" style="left:413px">200</div><div class="cell" style="left:466px">fetch</div><div class="cell u" style="left:517px;width:45px;overflow:hidden">recommended</div><div class="cell" style="left:563px;width:47px;text-align:right">0.8 kB</div><div class="cell" style="left:614px;width:58px;text-align:right">15 ms</div></div>
<div class="row" style="top:269px;background:#1f1f1f"><svg style="left:5px;top:4px" width="14" height="13" viewBox="0 0 14 13"><path d="M4.5 1.5 Q2.5 1.5 2.5 3.5 V5 Q2.5 6.5 1 6.5 Q2.5 6.5 2.5 8 V9.5 Q2.5 11.5 4.5 11.5 M9.5 1.5 Q11.5 1.5 11.5 3.5 V5 Q11.5 6.5 13 6.5 Q11.5 6.5 11.5 8 V9.5 Q11.5 11.5 9.5 11.5" fill="none" stroke="#e8844c" stroke-width="1.4"/><path d="M7 3.5 V4.6 M6.6 7 L7.4 7 L6.6 10" stroke="#e8844c" stroke-width="1.3" fill="none"/></svg><div class="cell" style="left:23px">check</div><div class="cell" style="left:413px">200</div><div class="cell" style="left:466px">fetch</div><div class="cell u" style="left:517px;width:45px;overflow:hidden">recommended</div><div class="cell" style="left:563px;width:47px;text-align:right">0.8 kB</div><div class="cell" style="left:614px;width:58px;text-align:right">17 ms</div></div>
<div class="vl" style="left:409px;top:137px;height:524px"></div>
<div class="vl" style="left:462px;top:137px;height:524px"></div>
<div class="vl" style="left:513px;top:137px;height:524px"></div>
<div class="vl" style="left:563px;top:137px;height:524px"></div>
<div class="vl" style="left:614px;top:137px;height:524px"></div>
<svg style="left:658px;top:158px" width="14" height="16" viewBox="0 0 14 16"><path d="M14 0 L3 8 L14 16 Z" fill="#6b6b6b"/></svg>
<div class="ln" style="top:661px"></div>
<div class="t" style="left:12px;top:668px">요청 6건</div><div class="vl" style="left:67px;top:667px;height:16px;background:#5a5a5a"></div><div class="t" style="left:77px;top:668px">4.9 kB 전송됨</div><div class="vl" style="left:160px;top:667px;height:16px;background:#5a5a5a"></div><div class="t" style="left:171px;top:668px">318 byte 리소스</div>
<div class="ln" style="top:688px"></div>
<div style="left:0;top:689px;width:672px;height:26px;background:#383838"></div>
<div style="left:15px;top:696px;width:3px;height:3px;border-radius:50%;background:#ccc"></div><div style="left:15px;top:701px;width:3px;height:3px;border-radius:50%;background:#ccc"></div><div style="left:15px;top:706px;width:3px;height:3px;border-radius:50%;background:#ccc"></div>
<div class="t" style="left:39px;top:696px;color:#a8c7fa;font-size:13px">콘솔</div>
<div style="left:29px;top:712px;width:44px;height:3px;background:#a8c7fa;border-radius:2px 2px 0 0"></div>
<div class="t" style="left:83px;top:696px;color:#d0d0d0;font-size:13px">AI 지원</div><svg style="left:126px;top:697px" width="11" height="12" viewBox="0 0 11 12"><path d="M2.5 1 H8.5 M4 1 V4.5 L1 10.8 H10 L7 4.5 V1" fill="none" stroke="#d0d0d0" stroke-width="1.3" stroke-linejoin="round"/></svg>
<div class="t" style="left:172px;top:696px;color:#d0d0d0;font-size:13px">새로운 소식</div>
<svg style="left:654px;top:695px" width="15" height="15" viewBox="0 0 15 15"><path d="M1.5 1.5 L13.5 13.5 M13.5 1.5 L1.5 13.5" stroke="#d0d0d0" stroke-width="1.5"/></svg>
<div class="ln" style="top:715px"></div>
<svg style="left:10px;top:722px" width="15" height="15" viewBox="0 0 15 15"><rect x="1" y="1" width="13" height="13" rx="1.5" fill="none" stroke="#c8c8c8" stroke-width="1.3"/><path d="M4.5 1 V14" stroke="#c8c8c8" stroke-width="1.3"/><path d="M7.5 4.5 L10.5 7.5 L7.5 10.5 Z" fill="#c8c8c8"/></svg>
<svg style="left:37px;top:721px" width="16" height="16" viewBox="0 0 16 16"><circle cx="8" cy="8" r="6.6" fill="none" stroke="#c8c8c8" stroke-width="1.4"/><path d="M3.4 12.6 L12.6 3.4" stroke="#c8c8c8" stroke-width="1.4"/></svg>
<div class="vl" style="left:63px;top:721px;height:16px;background:#5a5a5a"></div>
<div class="t" style="left:76px;top:722px;font-size:13px">top</div><svg style="left:99px;top:727px" width="9" height="6" viewBox="0 0 9 6"><path d="M0 0 H9 L4.5 6 Z" fill="#c8c8c8"/></svg>
<div class="vl" style="left:118px;top:721px;height:16px;background:#5a5a5a"></div>
<svg style="left:128px;top:723px" width="19" height="12" viewBox="0 0 19 12"><path d="M1 6 C4 1 7 0.8 9.5 0.8 C12 0.8 15 1 18 6 C15 11 12 11.2 9.5 11.2 C7 11.2 4 11 1 6 Z" fill="none" stroke="#c8c8c8" stroke-width="1.4"/><circle cx="9.5" cy="6" r="2.6" fill="none" stroke="#c8c8c8" stroke-width="1.5"/></svg>
<div class="vl" style="left:155px;top:721px;height:16px;background:#5a5a5a"></div>
<div style="left:163px;top:719px;width:273px;height:20px;border-radius:10px;background:#383838"></div>
<svg style="left:176px;top:724px" width="11" height="11" viewBox="0 0 11 11"><path d="M0.8 1 H10.2 L6.5 5.5 V10.2 H4.5 V5.5 Z" fill="none" stroke="#c8c8c8" stroke-width="1.2"/></svg>
<div class="t" style="left:196px;top:722px;font-size:13px">필터</div>
<div class="t" style="left:447px;top:722px;font-size:13px">기본 수준</div><svg style="left:509px;top:727px" width="9" height="6" viewBox="0 0 9 6"><path d="M0 0 H9 L4.5 6 Z" fill="#c8c8c8"/></svg>
<div class="vl" style="left:523px;top:721px;height:16px;background:#5a5a5a"></div>
<div class="t" style="left:530px;top:722px;font-size:13px">문제 2건:</div>
<svg style="left:586px;top:723px" width="12" height="12" viewBox="0 0 12 12"><path d="M1 1 H11 V9 H4 L1 11.5 Z" fill="#f28b50"/><path d="M6 2.5 V5.8 M6 7 V8" stroke="#282828" stroke-width="1.3"/></svg><div class="t" style="left:599px;top:722px;font-size:13px">1</div>
<svg style="left:612px;top:723px" width="12" height="12" viewBox="0 0 12 12"><path d="M1 1 H11 V9 H4 L1 11.5 Z" fill="#7cacf8"/><path d="M3 3.5 H9 M3 6 H7" stroke="#282828" stroke-width="1.1"/></svg><div class="t" style="left:625px;top:722px;font-size:13px">1</div>
<div class="vl" style="left:638px;top:721px;height:16px;background:#5a5a5a"></div>
<svg style="left:648px;top:721px" width="16" height="16" viewBox="0 0 16 16"><path d="M8 1 L9.3 1.2 L9.7 3 L11.2 3.8 L12.9 3.1 L14 4.3 L13.2 6 L13.6 7.5 L15 8.4 L14.8 9.8 L13.1 10.4 L12.3 11.8 L12.7 13.6 L11.4 14.5 L9.9 13.4 L8.4 13.7 L7.4 15.1 L6 14.8 L5.6 13.1 L4.3 12.2 L2.5 12.6 L1.7 11.4 L2.8 9.9 L2.5 8.4 L1 7.5 L1.3 6.1 L3 5.6 L3.8 4.2 L3.4 2.5 L4.6 1.7 L6.1 2.8 L7.6 2.5 Z" fill="none" stroke="#c8c8c8" stroke-width="1.3" stroke-linejoin="round"/><circle cx="8" cy="8" r="2.5" fill="none" stroke="#c8c8c8" stroke-width="1.3"/></svg>
<div class="ln" style="top:742px"></div>
<div class="mono" style="left:29px;top:750px">content ====</div>
<svg style="left:115px;top:755px" width="5" height="7" viewBox="0 0 5 7"><path d="M0 0 L5 3.5 L0 7 Z" fill="#bbb"/></svg><div class="mono" style="left:124px;top:751px;font-style:italic">{…}</div>
<div class="mono lnk" style="left:493px;top:750px">recommended-result.js:229</div>
<div class="ln" style="left:29px;top:769px;width:617px"></div>
<div class="mono" style="left:29px;top:774px">key ==== 10</div><div class="mono lnk" style="left:493px;top:774px">recommended-result.js:236</div>
<div class="ln" style="left:29px;top:790px;width:617px"></div>
<div class="mono" style="left:29px;top:795px">test*****</div><div class="mono lnk" style="left:493px;top:795px">recommended-result.js:983</div>
<div style="left:5px;top:814px;width:666px;height:161px;background:#4e3034;border-radius:5px"></div>
<svg style="left:13px;top:817px" width="13" height="13" viewBox="0 0 13 13"><circle cx="6.5" cy="6.5" r="6" fill="#e46962"/><path d="M4 4 L9 9 M9 4 L4 9" stroke="#4e3034" stroke-width="1.3"/></svg>
<svg style="left:33px;top:819px" width="6" height="8" viewBox="0 0 6 8"><path d="M0 0 L6 4 L0 8 Z" fill="#bdbdbd"/></svg>
<div class="mono" style="left:43px;top:817px;color:#f9dedc">Uncaught (in promise) TypeError: this.increaseHits is not a function
  at Cn.openViewerModal (<span class="lnk">recommended-result.js:998:28</span>)
  at Cn.doAction (<span class="lnk">recommended-result.js:374:26</span>)
  at Be (<span class="lnk">vue.min.js:6:11394</span>)
  at a.n (<span class="lnk">vue.min.js:6:13178</span>)
  at Be (<span class="lnk">vue.min.js:6:11394</span>)
  at e.$emit (<span class="lnk">vue.min.js:6:34446</span>)
  at a.selectContent (<span class="lnk">contentLibraryCombinedCard.js:259:10</span>)
  at click (eval at Qa (<span class="lnk">vue.min.js:6:92206</span>), &lt;anonymous&gt;:3:120)
  at Be (<span class="lnk">vue.min.js:6:11394</span>)
  at HTMLDivElement.n (<span class="lnk">vue.min.js:6:13178</span>)</div>
<div class="mono lnk" style="left:493px;top:817px">recommended-result.js:998</div>
<svg style="left:12px;top:984px" width="7" height="10" viewBox="0 0 7 10"><path d="M1 1 L5.5 5 L1 9" fill="none" stroke="#7cacf8" stroke-width="1.5"/></svg>
</div>
</body></html>
